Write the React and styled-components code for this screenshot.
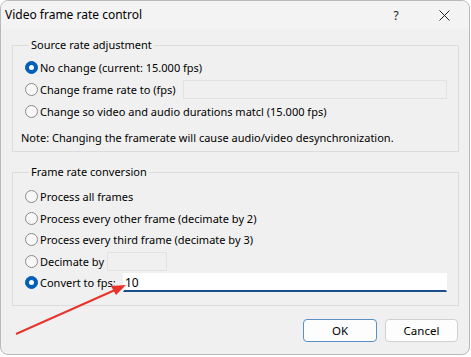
import React from 'react';
import styled, { createGlobalStyle } from 'styled-components';

const GlobalStyle = createGlobalStyle`
  html, body {
    margin: 0;
    padding: 0;
    background: #ffffff;
  }
  body {
    font-family: "Noto Sans", "Open Sans", sans-serif;
    font-size: 11px;
    color: #000;
  }
`;

const Window = styled.div`
  position: relative;
  box-sizing: border-box;
  width: 470px;
  height: 355px;
  background: #f0f0f0;
  border: 1px solid #b9b9b9;
  border-radius: 8px;
  display: flex;
  flex-direction: column;
  overflow: hidden;
`;

const TitleBar = styled.div`
  height: 28px;
  display: flex;
  align-items: center;
  padding: 0 1px 0 4px;
  background: #f3f3f3;
`;

const Title = styled.div`
  flex: 1;
  font-size: 12px;
  margin-top: -2px;
`;

const TitleButton = styled.div`
  width: 48px;
  height: 28px;
  display: flex;
  align-items: center;
  justify-content: center;
  font-size: 12px;
  color: #222;
`;

const Body = styled.div`
  padding: 8px 10px 0 11px;
  display: flex;
  flex-direction: column;
  gap: 12px;
`;

const Group = styled.fieldset`
  margin: 0;
  padding: 0 11px ${p => p.$bottom}px 12px;
  border: 1px solid #dcdcdc;
  min-width: 0;
`;

const Legend = styled.legend`
  margin-left: 4px;
  padding: 0 2px;
  line-height: 16px;
`;

const Rows = styled.div`
  display: flex;
  flex-direction: column;
  padding-top: ${p => p.$top}px;
`;

const Row = styled.div`
  height: ${p => p.$h}px;
  display: flex;
  align-items: center;
`;

const Radio = styled.span`
  box-sizing: border-box;
  width: 13px;
  height: 13px;
  border-radius: 50%;
  flex: none;
  display: flex;
  align-items: center;
  justify-content: center;
  background: ${p => (p.$on ? '#005fb8' : '#f7f7f7')};
  border: 1px solid ${p => (p.$on ? '#005fb8' : '#8a8a8a')};
  &::after {
    content: '';
    display: ${p => (p.$on ? 'block' : 'none')};
    width: 5px;
    height: 5px;
    border-radius: 50%;
    background: #fff;
  }
`;

const Label = styled.span`
  margin-left: 2px;
  white-space: nowrap;
  ${p => p.$w && `min-width: ${p.$w}px; flex: none;`}
`;

const Note = styled.div`
  margin: 8px 0 0 -4px;
  line-height: 16px;
`;

const Field = styled.div`
  box-sizing: border-box;
  height: ${p => p.$h || 19}px;
  ${p => (p.$w ? `width: ${p.$w}px;` : 'flex: 1;')}
  background: ${p => (p.$active ? '#ffffff' : '#f0f0f0')};
  border: 1px solid ${p => (p.$active ? '#ffffff' : '#e2e2e2')};
  border-bottom: ${p => (p.$active ? '2px solid #1a4f8a' : '1px solid #e2e2e2')};
  padding-left: 1px;
  display: flex;
  align-items: center;
  font-size: 12px;
`;

const Footer = styled.div`
  display: flex;
  justify-content: flex-end;
  gap: 8px;
  padding: 13px 11px 0 0;
`;

const Button = styled.button`
  box-sizing: border-box;
  width: ${p => p.$w}px;
  height: 23px;
  font-family: inherit;
  font-size: 11.5px;
  color: #000;
  background: #fdfdfd;
  border: 1px solid ${p => (p.$primary ? '#5b8fc7' : '#d0d0d0')};
  border-radius: 4px;
  padding: 0;
`;

const Arrow = styled.svg`
  position: absolute;
  left: 0;
  top: 0;
  pointer-events: none;
`;

const RadioRow = ({ on, label, w, h, children }) => (
  <Row $h={h}>
    <Radio $on={on} />
    <Label $w={w}>{label}</Label>
    {children}
  </Row>
);

export default function App() {
  return (
    <>
      <GlobalStyle />
      <Window>
        <TitleBar>
          <Title>Video frame rate control</Title>
          <TitleButton>?</TitleButton>
          <TitleButton>
            <svg width="11" height="11" viewBox="0 0 11 11">
              <path d="M0.5 0.5 L10.5 10.5 M10.5 0.5 L0.5 10.5" stroke="#222" strokeWidth="1" />
            </svg>
          </TitleButton>
        </TitleBar>
        <Body>
          <Group $bottom={5}>
            <Legend>Source rate adjustment</Legend>
            <Rows $top={3}>
              <RadioRow on h={22} label="No change (current: 15.000 fps)" />
              <RadioRow h={22} w={143} label="Change frame rate to (fps)">
                <Field />
              </RadioRow>
              <RadioRow h={22} label="Change so video and audio durations matcl (15.000 fps)" />
            </Rows>
            <Note>Note: Changing the framerate will cause audio/video desynchronization.</Note>
          </Group>
          <Group $bottom={11}>
            <Legend>Frame rate conversion</Legend>
            <Rows $top={6}>
              <RadioRow h={21.5} label="Process all frames" />
              <RadioRow h={21.5} label="Process every other frame (decimate by 2)" />
              <RadioRow h={21.5} label="Process every third frame (decimate by 3)" />
              <RadioRow h={21.5} w={67} label="Decimate by">
                <Field $w={60} />
              </RadioRow>
              <RadioRow on h={21.5} w={83} label="Convert to fps:">
                <Field $active>10</Field>
              </RadioRow>
            </Rows>
          </Group>
        </Body>
        <Footer>
          <Button $primary $w={74}>OK</Button>
          <Button $w={73}>Cancel</Button>
        </Footer>
        <Arrow width="470" height="355">
          <line x1="15" y1="333" x2="114" y2="289" stroke="#e8332a" strokeWidth="2" />
          <polygon points="125,284 110,285 115,294" fill="#e8332a" />
        </Arrow>
      </Window>
    </>
  );
}
